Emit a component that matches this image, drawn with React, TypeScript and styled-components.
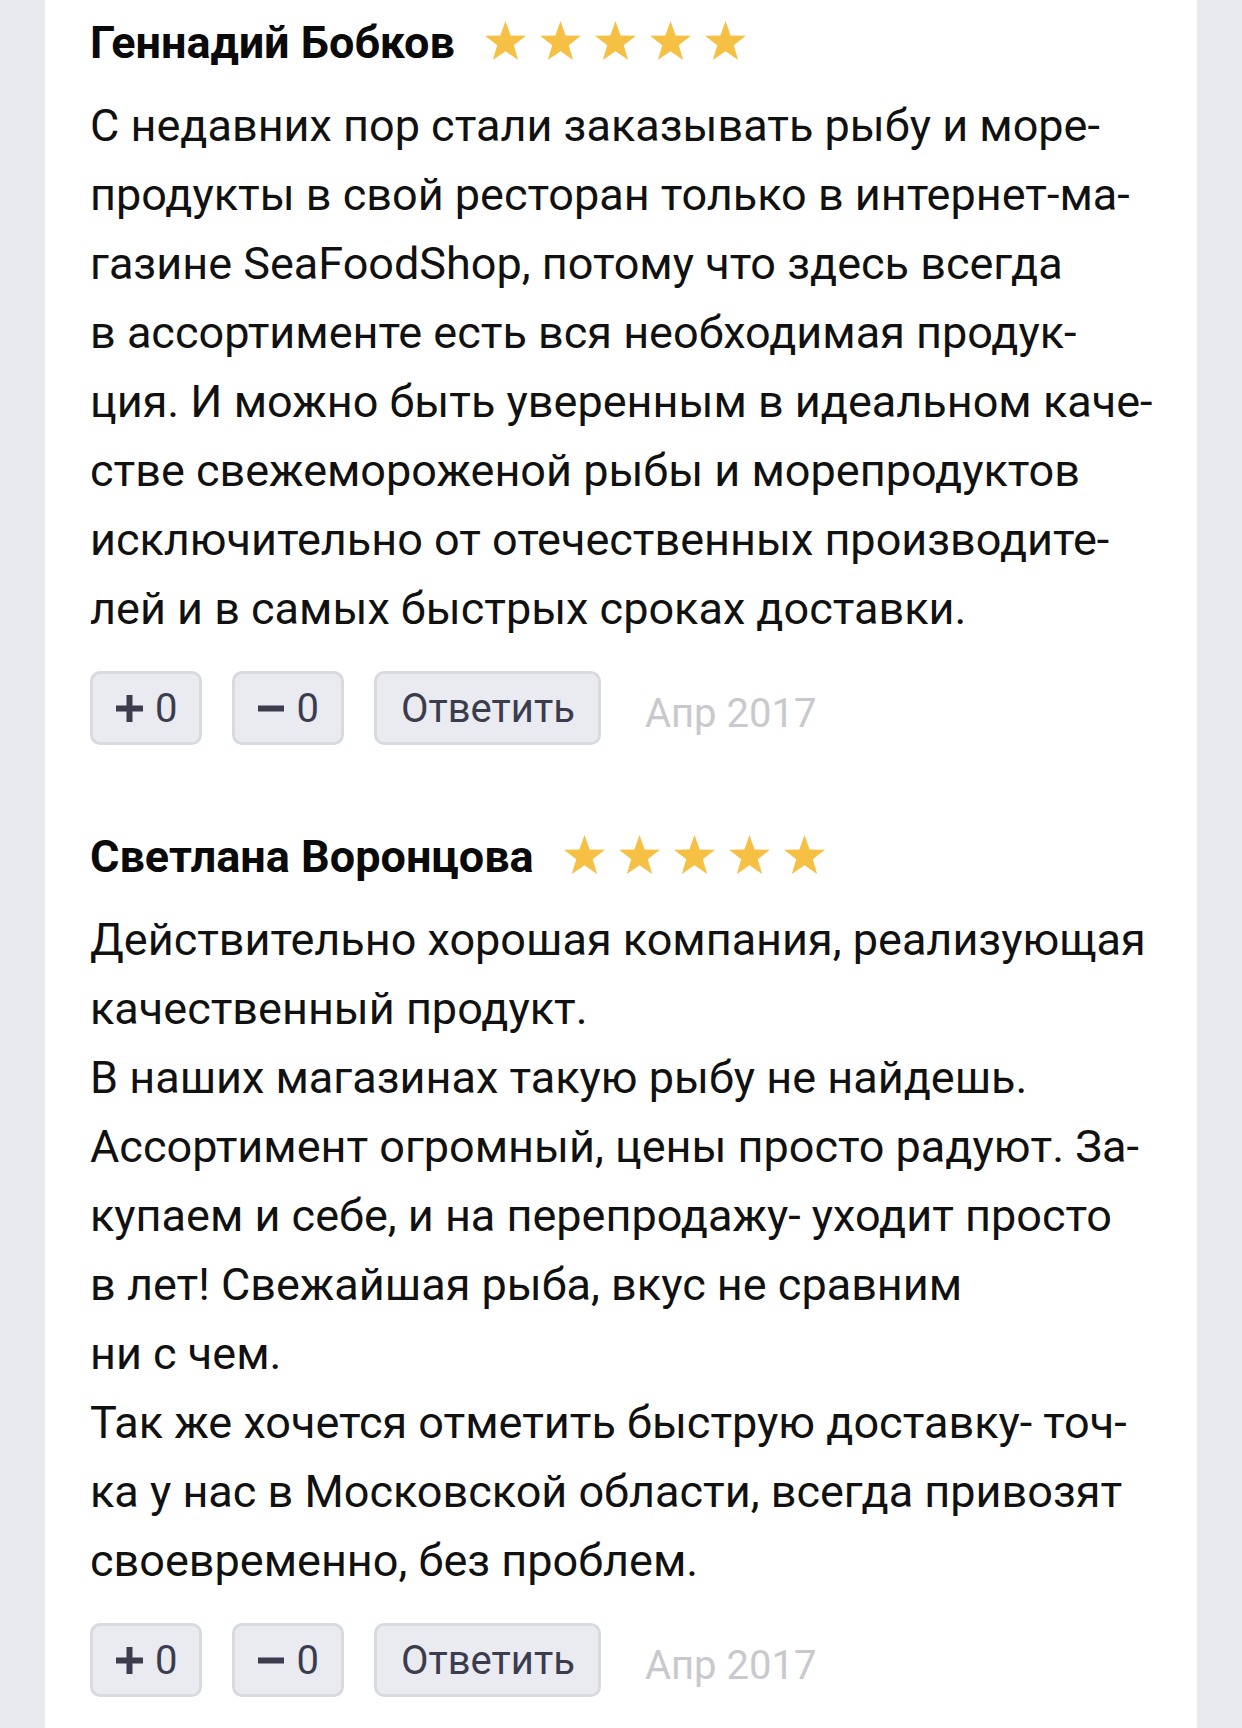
import React from "react";
import styled, { createGlobalStyle } from "styled-components";

const GlobalStyle = createGlobalStyle`
  html, body {
    margin: 0;
    padding: 0;
    background: #e9eaef;
  }
  body {
    font-family: Roboto, "Liberation Sans", Arial, sans-serif;
    -webkit-font-smoothing: antialiased;
  }
`;

const Page = styled.div`
  width: 1242px;
  height: 1728px;
  overflow: hidden;
  background: #e9eaef;
  padding: 0 45px;
  box-sizing: border-box;
`;

const Card = styled.div`
  background: #ffffff;
  height: 100%;
  padding: 8px 45px 0;
  box-sizing: border-box;
  display: flex;
  flex-direction: column;
  gap: 77px;
`;

const Review = styled.article`
  display: flex;
  flex-direction: column;
`;

const Header = styled.div`
  display: flex;
  align-items: center;
  gap: 30px;
  height: 69px;
`;

const Name = styled.span`
  font-family: Roboto, "Liberation Sans", Arial, sans-serif;
  font-weight: 700;
  font-size: 45px;
  line-height: 69px;
  color: #0a0a0a;
`;

const Stars = styled.div`
  display: flex;
  gap: 14px;
  align-items: center;
  margin-top: -4px;
`;

const StarIcon = styled.svg`
  display: block;
  flex: none;
`;

const Body = styled.p`
  margin: 14px 0 0;
  font-size: 45px;
  line-height: 69px;
  color: #111111;
  white-space: pre;
`;

const Actions = styled.div`
  display: flex;
  align-items: center;
  gap: 30px;
  margin-top: 28px;
`;

const Button = styled.button<{ $wide?: boolean }>`
  font-family: Roboto, "Liberation Sans", Arial, sans-serif;
  height: 74px;
  padding: 0 ${(p) => (p.$wide ? "23px" : "22px")} 0 ${(p) => (p.$wide ? "24px" : "23px")};
  box-sizing: border-box;
  background: #eaebf0;
  border: 3px solid #d9dae0;
  border-radius: 10px;
  color: #3b3c4e;
  font-size: 40px;
  display: flex;
  align-items: center;
  gap: 12px;
  cursor: pointer;
`;

const SignIcon = styled.svg`
  display: block;
  flex: none;
`;

const DateText = styled.span`
  margin-left: 14px;
  font-size: 40px;
  color: #c9c9cd;
  margin-top: 10px;
`;

const Plus = () => (
  <SignIcon width="27" height="27" viewBox="0 0 27 27" aria-hidden="true">
    <path d="M10.5 0h6v10.5H27v6H16.5V27h-6V16.5H0v-6h10.5z" fill="#3b3c4e" />
  </SignIcon>
);

const Minus = () => (
  <SignIcon width="26" height="27" viewBox="0 0 26 27" aria-hidden="true">
    <rect x="0" y="10.5" width="26" height="6" fill="#3b3c4e" />
  </SignIcon>
);

// five-pointed star filling its box (outer radius 21.5, inner ~8.6)
const starPoints = (() => {
  const R = 21.5;
  const r = 8.7;
  const cx = 20.5;
  const cy = 21.5;
  const pts: string[] = [];
  for (let i = 0; i < 10; i++) {
    const rad = i % 2 === 0 ? R : r;
    const a = -Math.PI / 2 + (i * Math.PI) / 5;
    pts.push(`${(cx + rad * Math.cos(a)).toFixed(2)},${(cy + rad * Math.sin(a)).toFixed(2)}`);
  }
  return pts.join(" ");
})();

const Star = () => (
  <StarIcon width="41" height="39" viewBox="0 0 41 39" aria-hidden="true">
    <polygon points={starPoints} fill="#f5c043" />
  </StarIcon>
);

type ReviewData = { name: string; text: string; date: string };

const reviews: ReviewData[] = [
  {
    name: "Геннадий Бобков",
    text:
      "С недавних пор стали заказывать рыбу и море-\n" +
      "продукты в свой ресторан только в интернет-ма-\n" +
      "газине SeaFoodShop, потому что здесь всегда\n" +
      "в ассортименте есть вся необходимая продук-\n" +
      "ция. И можно быть уверенным в идеальном каче-\n" +
      "стве свежемороженой рыбы и морепродуктов\n" +
      "исключительно от отечественных производите-\n" +
      "лей и в самых быстрых сроках доставки.",
    date: "Апр 2017",
  },
  {
    name: "Светлана Воронцова",
    text:
      "Действительно хорошая компания, реализующая\n" +
      "качественный продукт.\n" +
      "В наших магазинах такую рыбу не найдешь.\n" +
      "Ассортимент огромный, цены просто радуют. За-\n" +
      "купаем и себе, и на перепродажу- уходит просто\n" +
      "в лет! Свежайшая рыба, вкус не сравним\n" +
      "ни с чем.\n" +
      "Так же хочется отметить быструю доставку- точ-\n" +
      "ка у нас в Московской области, всегда привозят\n" +
      "своевременно, без проблем.",
    date: "Апр 2017",
  },
];

const ReviewItem = ({ r }: { r: ReviewData }) => (
  <Review>
    <Header>
      <Name>{r.name}</Name>
      <Stars>
        {[0, 1, 2, 3, 4].map((i) => (
          <Star key={i} />
        ))}
      </Stars>
    </Header>
    <Body>{r.text}</Body>
    <Actions>
      <Button aria-label="+0">
        <Plus />0
      </Button>
      <Button aria-label="−0">
        <Minus />0
      </Button>
      <Button $wide>Ответить</Button>
      <DateText>{r.date}</DateText>
    </Actions>
  </Review>
);

export default function App() {
  return (
    <>
      <GlobalStyle />
      <Page>
        <Card>
          {reviews.map((r) => (
            <ReviewItem key={r.name} r={r} />
          ))}
        </Card>
      </Page>
    </>
  );
}
